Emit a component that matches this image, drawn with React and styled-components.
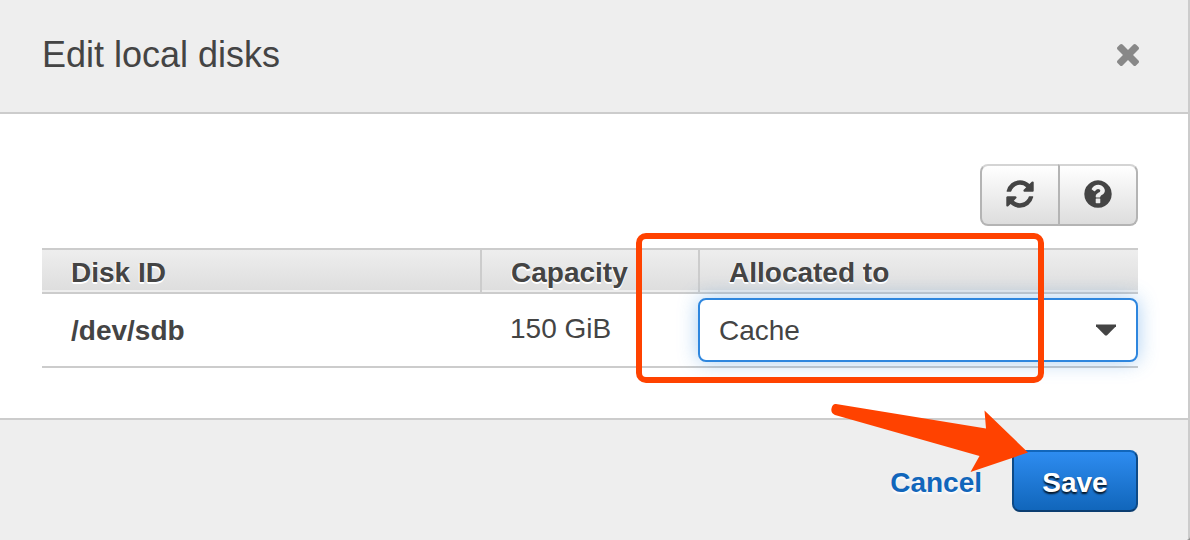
import React from "react";
import styled, { createGlobalStyle } from "styled-components";

const RED = "#ff4200";

const GlobalStyle = createGlobalStyle`
  *, *::before, *::after { box-sizing: border-box; }
  body {
    margin: 0;
    background: #8c8c8c;
    color: #444;
    font: 28px/38px "Liberation Sans", Arial, sans-serif;
  }
  button, select { font: inherit; color: inherit; margin: 0; }
`;

const Dialog = styled.section`
  border-right: 2px solid #ccc;
  border-bottom-right-radius: 4px;
  background: #fff;
  overflow: hidden;
`;

const Header = styled.header`
  display: flex;
  align-items: center;
  justify-content: space-between;
  padding: 33px 49px 35px 42px;
  background: #eee;
  border-bottom: 2px solid #ccc;
`;

const Title = styled.h1`
  margin: 0;
  font-size: 36px;
  line-height: 44px;
  font-weight: 400;
`;

const CloseButton = styled.button`
  display: flex;
  padding: 0;
  border: 0;
  background: none;
  color: #888;
  cursor: pointer;
`;

const Body = styled.div`
  padding: 50px 50px 50px 42px;
`;

const Toolbar = styled.div`
  display: flex;
  justify-content: flex-end;
  margin-bottom: 22px;
`;

const ToolButton = styled.button`
  display: flex;
  align-items: center;
  justify-content: center;
  width: 80px;
  height: 62px;
  padding: 0 0 2px;
  border: 2px solid #b4b4b4;
  border-top-color: #d4d4d4;
  background: linear-gradient(#fff, #ddd);
  cursor: pointer;

  &:first-child { border-radius: 8px 0 0 8px; }
  &:last-child { border-radius: 0 8px 8px 0; margin-left: -2px; }
`;

const TableArea = styled.div`
  position: relative;
`;

const Table = styled.table`
  width: 100%;
  table-layout: fixed;
  border-collapse: separate;
  border-spacing: 0;
  text-align: left;
`;

const Column = styled.col`
  width: ${(p) => p.$width || "auto"};
`;

const HeadCell = styled.th`
  padding: 4px 0 0 29px;
  border-top: 2px solid #ccc;
  border-bottom: 2px solid #ccc;
  background: linear-gradient(#eee, #ddd);
  box-shadow: inset 0 -2px 0 #eee;
  text-shadow: 0 2px 0 #fff, -1px 1px 0 #fff;

  & + & { border-left: 2px solid #ccc; }
`;

const RowHead = styled.th`
  height: 74px;
  padding: 2px 0 0 29px;
  border-bottom: 2px solid #ccc;
`;

const Cell = styled.td`
  padding: ${(p) => (p.$control ? "0" : "0 0 2px 30px")};
  border-bottom: 2px solid #ccc;
`;

const SelectBox = styled.div`
  position: relative;

  svg {
    position: absolute;
    top: 26px;
    right: 22px;
    pointer-events: none;
  }
`;

const Select = styled.select`
  display: block;
  width: 100%;
  height: 64px;
  padding: 2px 56px 0 19px;
  appearance: none;
  border: 2px solid #2e86de;
  border-radius: 8px;
  outline: 0;
  background: #fff;
  box-shadow: 0 0 20px rgba(46, 134, 222, 0.4);
`;

const Highlight = styled.div`
  position: absolute;
  top: -15px;
  bottom: -15px;
  right: 94px;
  width: 408px;
  border: 6px solid ${RED};
  border-radius: 10px;
  pointer-events: none;
`;

const Footer = styled.footer`
  padding: 30px 50px 28px 42px;
  background: #eee;
  border-top: 2px solid #ccc;
`;

const Actions = styled.div`
  position: relative;
  display: flex;
  align-items: center;
  justify-content: flex-end;
  gap: 30px;
`;

const CancelButton = styled.button`
  padding: 4px 0 0;
  border: 0;
  background: none;
  color: #1166bb;
  font-weight: 700;
  text-shadow: 0 2px 2px #fff;
  cursor: pointer;
`;

const SaveButton = styled.button`
  min-width: 126px;
  height: 62px;
  padding: 4px 28px 0;
  border: 2px solid #0d4a87;
  border-top-color: #1166bb;
  border-bottom-color: #0b3d70;
  border-radius: 8px;
  background: linear-gradient(#2e8cf0, #1166bb);
  color: #fff;
  font-weight: 700;
  text-shadow: 0 2px 2px rgba(0, 0, 0, 0.85);
  cursor: pointer;
`;

const Arrow = styled.svg`
  position: absolute;
  top: -48px;
  right: 108px;
  pointer-events: none;
`;

const CloseIcon = () => (
  <svg width="22" height="22" viewBox="302 366 1188 1188" fill="currentColor" aria-hidden="true">
    <path d="M1490 1322q0 40-28 68l-136 136q-28 28-68 28t-68-28l-294-294-294 294q-28 28-68 28t-68-28l-136-136q-28-28-28-68t28-68l294-294-294-294q-28-28-28-68t28-68l136-136q28-28 68-28t68 28l294 294 294-294q28-28 68-28t68 28l136 136q28 28 28 68t-28 68l-294 294 294 294q28 28 28 68z" />
  </svg>
);

const RefreshIcon = () => (
  <svg width="32" height="32" viewBox="0 0 1792 1792" fill="currentColor" aria-hidden="true">
    <path d="M1639 1056q0 5-1 7-64 268-268 434.5t-478 166.5q-146 0-282.5-55t-243.5-157l-129 129q-19 19-45 19t-45-19-19-45v-448q0-26 19-45t45-19h448q26 0 45 19t19 45-19 45l-137 137q71 66 161 102t187 36q134 0 250-65t186-179q11-17 53-117 8-23 30-23h192q13 0 22.5 9.5t9.5 22.5zm25-800v448q0 26-19 45t-45 19h-448q-26 0-45-19t-19-45 19-45l138-138q-148-137-349-137-134 0-250 65t-186 179q-11 17-53 117-8 23-30 23h-199q-13 0-22.5-9.5t-9.5-22.5v-7q65-268 270-434.5t480-166.5q146 0 284 55.5t245 156.5l130-129q19-19 45-19t45 19 19 45z" />
  </svg>
);

const HelpIcon = () => (
  <svg width="32" height="32" viewBox="0 0 1792 1792" fill="currentColor" aria-hidden="true">
    <path d="M1024 1376v-192q0-14-9-23t-23-9h-192q-14 0-23 9t-9 23v192q0 14 9 23t23 9h192q14 0 23-9t9-23zm256-672q0-88-55.5-163t-138.5-116-170-41q-243 0-371 213-15 24 8 42l132 100q7 6 19 6 16 0 25-12 53-68 86-92 34-24 86-24 48 0 85.5 26t37.5 59q0 38-20 61t-68 45q-63 28-115.5 86.5t-52.5 125.5v36q0 14 9 23t23 9h192q14 0 23-9t9-23q0-19 21.5-49.5t54.5-49.5q32-18 49-28.5t46-35 44.5-48 28-60.5 12.5-81zm384 192q0 209-103 385.5t-279.5 279.5-385.5 103-385.5-103-279.5-279.5-103-385.5 103-385.5 279.5-279.5 385.5-103 385.5 103 279.5 279.5 103 385.5z" />
  </svg>
);

const CaretIcon = () => (
  <svg width="20" height="12" viewBox="0 0 20 12" fill="#444" aria-hidden="true">
    <path d="M0 .6h20v1.600L10.800 11.600h-1.600L0 2.200z" />
  </svg>
);

export default function App() {
  return (
    <>
      <GlobalStyle />
      <Dialog role="dialog" aria-labelledby="dialog-title">
        <Header>
          <Title id="dialog-title">Edit local disks</Title>
          <CloseButton type="button" aria-label="Close">
            <CloseIcon />
          </CloseButton>
        </Header>
        <Body>
          <Toolbar>
            <ToolButton type="button" aria-label="Refresh">
              <RefreshIcon />
            </ToolButton>
            <ToolButton type="button" aria-label="Help">
              <HelpIcon />
            </ToolButton>
          </Toolbar>
          <TableArea>
            <Table>
              <colgroup>
                <Column />
                <Column $width="218px" />
                <Column $width="440px" />
              </colgroup>
              <thead>
                <tr>
                  <HeadCell scope="col">Disk ID</HeadCell>
                  <HeadCell scope="col">Capacity</HeadCell>
                  <HeadCell scope="col" id="allocated-to">Allocated to</HeadCell>
                </tr>
              </thead>
              <tbody>
                <tr>
                  <RowHead scope="row">/dev/sdb</RowHead>
                  <Cell>150 GiB</Cell>
                  <Cell $control>
                    <SelectBox>
                      <Select aria-labelledby="allocated-to" defaultValue="cache">
                        <option value="cache">Cache</option>
                      </Select>
                      <CaretIcon />
                    </SelectBox>
                  </Cell>
                </tr>
              </tbody>
            </Table>
            <Highlight />
          </TableArea>
        </Body>
        <Footer>
          <Actions>
            <CancelButton type="button">Cancel</CancelButton>
            <SaveButton type="button">Save</SaveButton>
            <Arrow width="200" height="72" viewBox="0 0 200 72" fill={RED} aria-hidden="true">
              <path d="M6 2 156 26.500 154.500 8.500 198 50.500 140.500 70 149.500 54 5 13Q0.500 11 1.500 6.500 2.500 1.500 6 2z" />
            </Arrow>
          </Actions>
        </Footer>
      </Dialog>
    </>
  );
}
